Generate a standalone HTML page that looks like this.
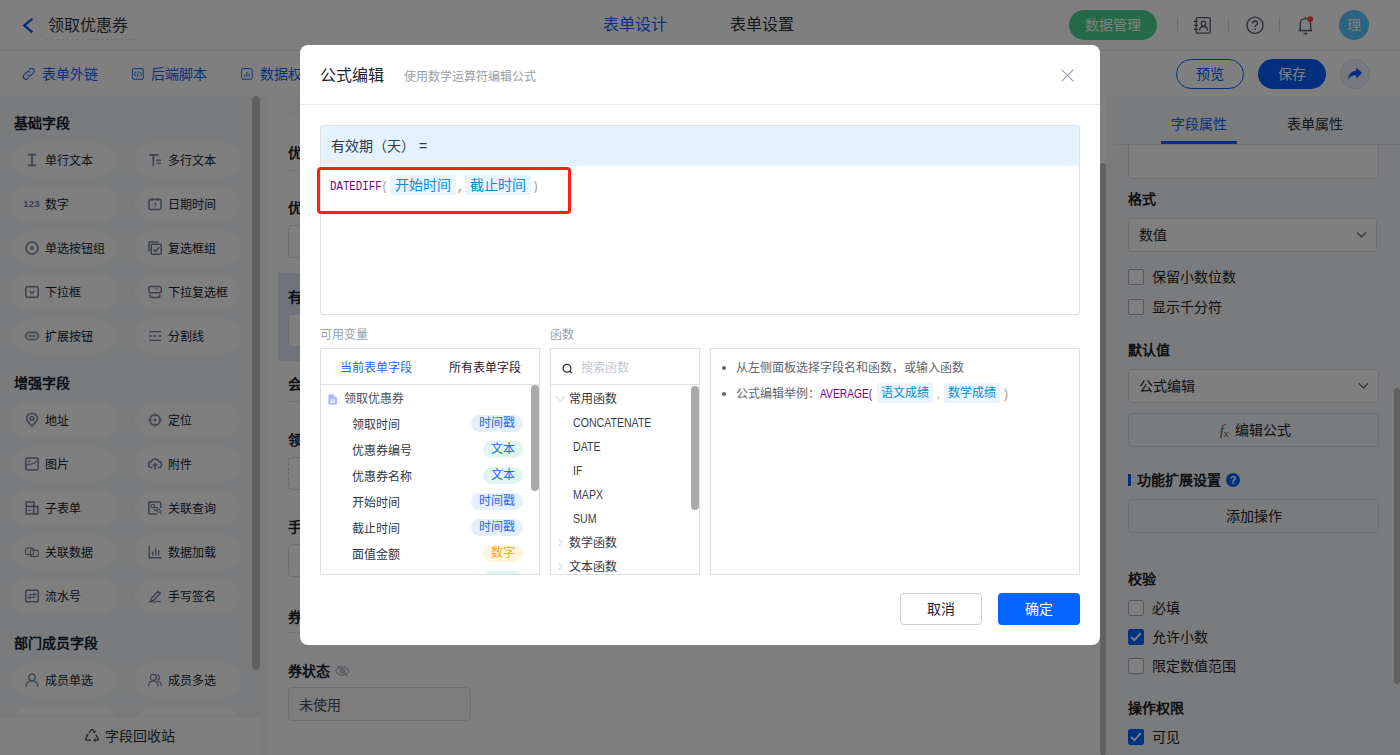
<!DOCTYPE html>
<html lang="zh-CN">
<head>
<meta charset="utf-8">
<title>公式编辑</title>
<style>
*{box-sizing:border-box;margin:0;padding:0}
html,body{width:1400px;height:755px;overflow:hidden;background:#fff}
body{font-family:"Liberation Sans",sans-serif;font-size:14px;color:#1f2329;position:relative}
.abs{position:absolute}
svg{display:block;overflow:visible}
/* ---------- base page ---------- */
#app{position:absolute;left:0;top:0;width:1400px;height:755px;background:#fff;overflow:hidden}
#hdr{position:absolute;left:0;top:0;width:1400px;height:51px;background:#fff;border-bottom:1px solid #eeeeee}
#tb{position:absolute;left:0;top:51px;width:1400px;height:45px;background:#fff}
.t{position:absolute;white-space:nowrap;line-height:20px;height:20px}
.b{font-weight:bold}
/* left */
#lp{position:absolute;left:0;top:96px;width:260px;height:659px;background:#f5f6f8;overflow:hidden}
.pill{position:absolute;width:105px;height:34px;border-radius:17px;background:#fff;font-size:12px;line-height:34px;color:#141e31;white-space:nowrap}
.pill span{position:absolute;left:33px;top:1px}
.pill svg{position:absolute;left:13px;top:9.500px}
.lt{position:absolute;left:14px;font-size:14px;font-weight:bold;color:#141e31;line-height:20px;white-space:nowrap}
/* canvas */
#cv{position:absolute;left:268px;top:96px;width:832px;height:659px;background:#fff;overflow:hidden}
/* right */
#rp{position:absolute;left:1106px;top:96px;width:294px;height:659px;background:#f5f6f8;overflow:hidden}
.cb{position:absolute;left:22px;width:16px;height:16px;border:1px solid #aab0be;border-radius:2px;background:#fff}
.cb.on{background:#0265ff;border-color:#0265ff}
.rl{position:absolute;left:46px;font-size:14px;line-height:20px;color:#1f2329;white-space:nowrap}
.rh{position:absolute;left:22px;font-size:14px;line-height:20px;font-weight:bold;color:#1f2329;white-space:nowrap}
.rbox{position:absolute;left:22px;width:251px;height:34px;border:1px solid #dcdfe4;border-radius:4px;background:#fff;font-size:14px;line-height:32px;color:#1f2329;white-space:nowrap}
/* mask */
#mask{position:absolute;left:0;top:0;width:1400px;height:755px;background:rgba(0,0,0,.5)}
/* modal */
#md{position:absolute;left:300px;top:45px;width:800px;height:600px;background:#fff;border-radius:8px;overflow:hidden}

/* modal internals (coords relative to 300,45) */
#md .hd{position:absolute;left:0;top:0;width:800px;height:60px;border-bottom:1px solid #e9e9e9}
.fx{position:absolute;left:20px;top:80px;width:760px;height:190px;border:1px solid #dfe1e5;border-radius:2px;background:#fff}
.fx .band{position:absolute;left:0;top:0;width:758px;height:40px;background:#e4f1fe}
.tag{display:inline-block;width:66px;text-align:center;overflow:hidden;white-space:nowrap;height:20px;line-height:20px;padding:0 5px;border-radius:2px;background:#e9f4fe;color:#0d8bd2;font-size:14px;vertical-align:middle}
.mono{font-family:"Liberation Mono",monospace}
.pn{position:absolute;top:303px;height:227px;border:1px solid #dddfe3;background:#fff;overflow:hidden}
.vi{position:absolute;left:31px;font-size:12px;line-height:20px;color:#33373d;white-space:nowrap}
.vt{position:absolute;height:17px;line-height:17px;border-radius:9px;font-size:12px;text-align:center;white-space:nowrap}
.vt.ts{right:16px;width:52px;background:#e6efff;color:#2468f2}
.vt.tx{right:16px;width:40px;background:#e2f5f3;color:#2468f2}
.vt.nm{right:16px;width:40px;background:#fff5dc;color:#f5a623}
.fi{position:absolute;font-size:12px;line-height:20px;color:#33373d;white-space:nowrap}
.fn{position:absolute;left:22px;font-size:12px;line-height:20px;color:#3a3f47;white-space:nowrap;transform:scaleX(.882);transform-origin:0 50%}
.sb{position:absolute;width:8px;border-radius:4px;background:#aaa}
</style>
</head>
<body>
<div id="app">
  <div id="hdr">
    <svg class="abs" style="left:20px;top:15px" width="16" height="20" viewBox="0 0 16 20"><polyline points="12.4,3.6 4.2,10.5 12.4,17.4" fill="none" stroke="#0560ff" stroke-width="2.3" stroke-linecap="butt" stroke-linejoin="miter"/></svg>
    <div class="t" style="left:48px;top:16px;font-size:16px;color:#33373d">领取优惠券</div>
    <div class="abs" style="left:46px;top:39px;width:88px;height:1px;background:repeating-linear-gradient(90deg,#e3e3e3 0,#e3e3e3 3px,transparent 3px,transparent 5px)"></div>
    <div class="t" style="left:603px;top:15px;font-size:16px;color:#1560ff">表单设计</div>
    <div class="t" style="left:730px;top:15px;font-size:16px;color:#2a2e35">表单设置</div>
    <div class="abs" style="left:1069px;top:10px;width:88px;height:30px;border-radius:15px;background:#4bd591;color:#fff;font-size:14px;line-height:30px;text-align:center">数据管理</div>
    <div class="abs" style="left:1177px;top:18px;width:1px;height:14px;background:#dcdcdc"></div>
    <div class="abs" style="left:1228px;top:18px;width:1px;height:14px;background:#dcdcdc"></div>
    <div class="abs" style="left:1279px;top:18px;width:1px;height:14px;background:#dcdcdc"></div>
    <!-- contacts icon -->
    <svg class="abs" style="left:1193px;top:16px" width="19" height="19" viewBox="0 0 19 19" fill="none" stroke="#555c70" stroke-width="1.3"><rect x="3.2" y="1.6" width="14" height="15.6" rx="1.6"/><path d="M0.8 5.4h4.2M0.8 9.4h4.2M0.8 13.4h4.2"/><circle cx="10.6" cy="7.4" r="2.3"/><path d="M6.6 14.4c0-2.6 1.8-3.9 4-3.9s4 1.3 4 3.9"/></svg>
    <!-- help icon -->
    <svg class="abs" style="left:1245px;top:15px" width="20" height="20" viewBox="0 0 20 20" fill="none" stroke="#555c70" stroke-width="1.3"><circle cx="10" cy="10.300" r="8.100"/><path d="M7.600 8.400c0-1.500 1.100-2.400 2.500-2.400s2.400.900 2.400 2.200c0 1.700-2.400 1.900-2.400 3.800" stroke-width="1.400"/><circle cx="10.100" cy="14.300" r="0.900" fill="#555c70" stroke="none"/></svg>
    <!-- bell icon -->
    <svg class="abs" style="left:1296px;top:15px" width="19" height="21" viewBox="0 0 19 21" fill="none" stroke="#555c70" stroke-width="1.4"><path d="M4.200 15.400V9.600c0-3.400 2.200-6 5.200-6s5.200 2.600 5.200 6v5.800"/><path d="M2.600 15.600h13.600" stroke-width="1.500"/><path d="M7.6 18.6h3.6" stroke-width="1.6"/><path d="M9.4 3.2V1.8"/><circle cx="14.2" cy="4.2" r="2.9" fill="#f5484a" stroke="none"/></svg>
    <div class="abs" style="left:1339px;top:10px;width:30px;height:30px;border-radius:15px;background:#58c7ff;color:#fff;font-size:14px;line-height:30px;text-align:center">理</div>
  </div>
  <div id="tb">
    <svg class="abs" style="left:22px;top:16px" width="13.600" height="13.600" viewBox="0 0 14 14" fill="none" stroke="#1560ff" stroke-width="1.050"><path d="M5.6 8.4a2.7 2.7 0 0 0 3.8 0l2.6-2.6a2.7 2.7 0 0 0-3.8-3.8l-1 1"/><path d="M8.4 5.6a2.7 2.7 0 0 0-3.8 0L2 8.2a2.7 2.7 0 0 0 3.8 3.8l1-1"/></svg>
    <div class="t" style="left:42px;top:13px;font-size:14px;color:#1560ff">表单外链</div>
    <svg class="abs" style="left:132px;top:17px" width="12" height="12" viewBox="0 0 13 12" preserveAspectRatio="none" fill="none" stroke="#1560ff" stroke-width="1"><rect x="0.600" y="0.600" width="11.600" height="10.600" rx="1.200"/><path d="M4.4 3.8L2.6 6l1.8 2.2M8.6 3.8L10.4 6 8.6 8.2M7.2 3.2L5.6 8.8" stroke-width="0.9"/></svg>
    <div class="t" style="left:151px;top:13px;font-size:14px;color:#1560ff">后端脚本</div>
    <svg class="abs" style="left:241px;top:17px" width="12" height="12" viewBox="0 0 13 12" preserveAspectRatio="none" fill="none" stroke="#1560ff" stroke-width="1"><rect x="0.600" y="0.600" width="11.600" height="10.600" rx="1.800"/><path d="M4 8.6V6.4M6.4 8.6V4M8.8 8.6V5.4" stroke-width="1"/></svg>
    <div class="t" style="left:260px;top:13px;font-size:14px;color:#1560ff">数据权限</div>
    <div class="abs" style="left:1176px;top:8px;width:68px;height:30px;border-radius:15px;border:1px solid #0560ff;color:#0560ff;font-size:14px;line-height:28px;text-align:center">预览</div>
    <div class="abs" style="left:1258px;top:8px;width:68px;height:30px;border-radius:15px;background:#0560ff;color:#fff;font-size:14px;line-height:30px;text-align:center">保存</div>
    <div class="abs" style="left:1340px;top:8px;width:30px;height:30px;border-radius:15px;background:#eef3fd;border:1px solid #dbe4f7"></div>
    <svg class="abs" style="left:1347px;top:15px" width="16" height="16" viewBox="0 0 16 16"><path d="M9.2 1.6L15.2 7l-6 5.4V9.2C5.4 9 2.8 10.4 1 13.6 1.4 8.4 4.4 5 9.2 4.8z" fill="#0560ff"/></svg>
  </div>
  <div id="lp">
    <div class="lt" style="top:17px">基础字段</div>
    <div class="pill" style="left:12px;top:47px"><svg width="14" height="14" viewBox="0 0 14 14" fill="none" stroke="#78819a" stroke-width="1.700"><path d="M3 1.600h8M7 1.600v10.800M3 12.400h8"/></svg><span>单行文本</span></div>
    <div class="pill" style="left:135px;top:47px"><svg width="14" height="14" viewBox="0 0 14 14" fill="none" stroke="#78819a" stroke-width="1.5"><path d="M1.200 1.800h9.400M5.400 1.800v11" stroke-width="1.800"/><path d="M8.400 7.200h4.400M8.400 10.400h4.400" stroke-width="1.400"/></svg><span>多行文本</span></div>
    <div class="pill" style="left:12px;top:91px"><div style="position:absolute;left:7.500px;top:-0.500px;width:24px;text-align:center;font-size:9.500px;font-weight:bold;color:#78819a;letter-spacing:0.2px;line-height:34px">123</div><span>数字</span></div>
    <div class="pill" style="left:135px;top:91px"><svg width="14" height="14" viewBox="0 0 14 14" fill="none" stroke="#78819a" stroke-width="1.5"><rect x="1" y="2.6" width="12" height="10" rx="1.6"/><path d="M4.2 1v3M9.8 1v3" stroke-width="1.4"/><path d="M5.600 6.800h2.800l-1.800 3.600" stroke-width="1"/></svg><span>日期时间</span></div>
    <div class="pill" style="left:12px;top:135px"><svg width="14" height="14" viewBox="0 0 14 14" fill="none" stroke="#78819a" stroke-width="1.5"><circle cx="7" cy="7" r="6"/><circle cx="7" cy="7" r="1.7" fill="#78819a" stroke="none"/></svg><span>单选按钮组</span></div>
    <div class="pill" style="left:135px;top:135px"><svg width="14" height="14" viewBox="0 0 14 14" fill="none" stroke="#78819a" stroke-width="1.5"><rect x="3.2" y="3.2" width="10" height="10" rx="1"/><path d="M5.4 8.2l2.2 2.2 3.6-4.2"/><path d="M1 10.4V1.8a.8.8 0 0 1 .8-.8h8.6"/></svg><span>复选框组</span></div>
    <div class="pill" style="left:12px;top:179px"><svg width="14" height="14" viewBox="0 0 14 14" fill="none" stroke="#78819a" stroke-width="1.5"><rect x="0.8" y="1.8" width="12.4" height="10.4" rx="1"/><path d="M4.8 6l2.2 2.2L9.2 6"/></svg><span>下拉框</span></div>
    <div class="pill" style="left:135px;top:179px"><svg width="14" height="14" viewBox="0 0 14 14" fill="none" stroke="#78819a" stroke-width="1.5"><rect x="0.8" y="1.6" width="12.4" height="6.2" rx="1.6"/><path d="M7.4 3.4l1.5 1.4 1.5-1.4" stroke-width="1"/><path d="M2.2 9.2v2.2a1 1 0 0 0 1 1h7.6a1 1 0 0 0 1-1V9.2"/></svg><span>下拉复选框</span></div>
    <div class="pill" style="left:12px;top:223px"><svg width="14" height="14" viewBox="0 0 14 14" fill="none" stroke="#78819a" stroke-width="1.5"><rect x="0.7" y="3.4" width="12.6" height="7.2" rx="3.6"/><path d="M3.8 7h6.4" stroke-width="1.4"/></svg><span>扩展按钮</span></div>
    <div class="pill" style="left:135px;top:223px"><svg width="14" height="14" viewBox="0 0 14 14" fill="none" stroke="#78819a" stroke-width="1.5"><path d="M1 2.6h12M1 11.4h12" stroke-width="1.3"/><path d="M1 7h2.6M5.4 7h3.2M10.4 7h2.6" stroke-width="1.3"/></svg><span>分割线</span></div>
    <div class="lt" style="top:277px">增强字段</div>
    <div class="pill" style="left:12px;top:307px"><svg width="14" height="14" viewBox="0 0 14 14" fill="none" stroke="#78819a" stroke-width="1.5"><path d="M7 13.2C3.4 9.8 1.6 7.6 1.6 5.6a5.4 5.4 0 0 1 10.8 0c0 2-1.8 4.2-5.4 7.6z"/><circle cx="7" cy="5.6" r="1.9"/></svg><span>地址</span></div>
    <div class="pill" style="left:135px;top:307px"><svg width="14" height="14" viewBox="0 0 14 14" fill="none" stroke="#78819a" stroke-width="1.5"><circle cx="7" cy="7" r="5.2"/><path d="M7 0.4v3M7 10.6v3M0.4 7h3M10.6 7h3"/><circle cx="7" cy="7" r="1.3" fill="#78819a" stroke="none"/></svg><span>定位</span></div>
    <div class="pill" style="left:12px;top:351px"><svg width="14" height="14" viewBox="0 0 14 14" fill="none" stroke="#78819a" stroke-width="1.5"><rect x="0.8" y="0.9" width="12.4" height="12.2" rx="1.6"/><path d="M1.4 8.6c2.2-2.8 4-0.6 6.2-1.8 2-1 3-2.4 5-2.4" stroke-width="1.1"/><circle cx="4.2" cy="4.2" r="0.9" fill="#78819a" stroke="none"/></svg><span>图片</span></div>
    <div class="pill" style="left:135px;top:351px"><svg width="14" height="14" viewBox="0 0 14 14" fill="none" stroke="#78819a" stroke-width="1.5"><path d="M4.6 10.6H3.8a3 3 0 0 1-.4-6 3.9 3.9 0 0 1 7.4 0 3 3 0 0 1-.4 6h-.8"/><path d="M7 12.8V7M4.8 8.8L7 6.6l2.2 2.2"/></svg><span>附件</span></div>
    <div class="pill" style="left:12px;top:395px"><svg width="14" height="14" viewBox="0 0 14 14" fill="none" stroke="#78819a" stroke-width="1.5"><path d="M1.2 1h7.6v12H1.2z"/><path d="M1.2 5.4h7.6"/><path d="M8.8 5.6h4v7.4h-4"/><path d="M3 9.2h3.4" stroke-width="1.1"/></svg><span>子表单</span></div>
    <div class="pill" style="left:135px;top:395px"><svg width="14" height="14" viewBox="0 0 14 14" fill="none" stroke="#78819a" stroke-width="1.5"><path d="M9.2 13H2a1.2 1.2 0 0 1-1.2-1.2V2.2A1.2 1.2 0 0 1 2 1h9.600a1.2 1.2 0 0 1 1.200 1.200V7"/><rect x="3.2" y="3.4" width="3" height="3" stroke-width="1"/><rect x="6.2" y="6.400" width="3" height="3" stroke-width="1"/><circle cx="10.600" cy="9.800" r="1.700" stroke-width="1"/><path d="M11.800 11.200l1.700 1.700" stroke-width="1.200"/></svg><span>关联查询</span></div>
    <div class="pill" style="left:12px;top:439px"><svg width="14" height="14" viewBox="0 0 14 14" fill="none" stroke="#78819a" stroke-width="1.2"><rect x="0.7" y="3.2" width="8" height="6.4" rx="1.6"/><rect x="5.3" y="5.200" width="8" height="6.400" rx="1.600"/></svg><span>关联数据</span></div>
    <div class="pill" style="left:135px;top:439px"><svg width="14" height="14" viewBox="0 0 14 14" fill="none" stroke="#78819a" stroke-width="1.5"><path d="M1.200 0.800v12h12" stroke-width="1.400"/><path d="M4.600 10.600V6.400M7.600 10.600V3.400M10.600 10.600V5.400" stroke-width="1.400"/></svg><span>数据加载</span></div>
    <div class="pill" style="left:12px;top:483px"><svg width="14" height="14" viewBox="0 0 14 14" fill="none" stroke="#78819a" stroke-width="1.5"><rect x="0.800" y="1.200" width="12.400" height="11.600" rx="0.800"/><path d="M3.400 5.600h7.200l-1.800-1.600M10.600 8.400H3.400l1.800 1.600" stroke-width="1.100"/></svg><span>流水号</span></div>
    <div class="pill" style="left:135px;top:483px"><svg width="14" height="14" viewBox="0 0 14 14" fill="none" stroke="#78819a" stroke-width="1.5"><path d="M3.400 9.400l6.600-7.000 2.200 2.000-6.600 7.000-3.000 0.800z"/><path d="M1.200 13c2.200-1.200 4.400 0.600 6.400-0.200 1.600-0.600 3.000-0.600 5.200 0.200" stroke-width="1.100"/></svg><span>手写签名</span></div>
    <div class="lt" style="top:537px">部门成员字段</div>
    <div class="pill" style="left:12px;top:567px"><svg width="14" height="14" viewBox="0 0 14 14" fill="none" stroke="#78819a" stroke-width="1.3"><circle cx="7" cy="4.400" r="3.200"/><path d="M1.200 13.400c0-3.400 2.400-5.600 5.800-5.600s5.800 2.200 5.800 5.600"/></svg><span>成员单选</span></div>
    <div class="pill" style="left:135px;top:567px"><svg width="14" height="14" viewBox="0 0 14 14" fill="none" stroke="#78819a" stroke-width="1.2"><circle cx="5.400" cy="4.400" r="3"/><path d="M0.600 13.200c0-3.200 2-5.400 4.800-5.400s4.800 2.200 4.800 5.400"/><path d="M9 1.600a3 3 0 0 1 0.400 5.800M10.400 8.200c1.800 0.600 3 2.400 3 5"/></svg><span>成员多选</span></div>
    <div class="pill" style="left:12px;top:611px"><svg width="14" height="14" viewBox="0 0 14 14" fill="none" stroke="#78819a" stroke-width="1.3"><circle cx="7" cy="4.400" r="3.200"/><path d="M1.200 13.400c0-3.400 2.400-5.600 5.800-5.600s5.800 2.200 5.800 5.600"/></svg><span>部门单选</span></div>
    <div class="pill" style="left:135px;top:611px"><svg width="14" height="14" viewBox="0 0 14 14" fill="none" stroke="#78819a" stroke-width="1.2"><circle cx="5.400" cy="4.400" r="3"/><path d="M0.600 13.200c0-3.200 2-5.400 4.800-5.400s4.800 2.200 4.800 5.400"/><path d="M9 1.600a3 3 0 0 1 0.400 5.800M10.400 8.200c1.800 0.600 3 2.400 3 5"/></svg><span>部门多选</span></div>
    <div class="abs" style="left:252px;top:0;width:8px;height:574px;border-radius:4px;background:#c0c0c0"></div>
    <div class="abs" style="left:0;top:621px;width:260px;height:38px;background:#fdfdfd;box-shadow:0 -2px 6px rgba(0,0,0,.05)"></div>
    <svg class="abs" style="left:84px;top:632px" width="16" height="15" viewBox="0 0 16 15" fill="none" stroke="#3a3f4a" stroke-width="1.200" stroke-linejoin="round"><path d="M5.200 5.200L7.200 1.800c.4-.7 1.300-.7 1.700 0l1.500 2.600"/><path d="M11.800 6.600l2.400 4.100c.4.700-.1 1.500-.9 1.500h-3.300"/><path d="M7 12.200H2.600c-.8 0-1.300-.8-.9-1.500l1.700-2.900"/><path d="M9 3.400l1.600 1.400.6-2M11.600 10.400l-1.800 1.800 1.800 1.600M1.800 7l1.800.6.400-2" stroke-width="1"/></svg>
    <div class="t" style="left:105px;top:630px;font-size:14px;color:#2a2e35">字段回收站</div>
  </div>
  <div id="cv">
    <!-- coords relative to (268,96) -->
    <div class="abs" style="left:20px;top:0;width:792px;height:20px;background:#f8f8f8"></div>
    <div class="t b" style="left:20px;top:47px">优惠券编号</div>
    <div class="abs" style="left:20px;top:74px;width:792px;height:1px;background:#e6e8ec"></div>
    <div class="t b" style="left:20px;top:102px">优惠券名称</div>
    <div class="abs" style="left:20px;top:129px;width:400px;height:33px;border:1px solid #dfe2e7;border-radius:4px;background:#fff"></div>
    <div class="abs" style="left:10px;top:177px;width:812px;height:88px;background:#e0e7f8"></div>
    <div class="t b" style="left:20px;top:191px">有效期（天）</div>
    <div class="abs" style="left:20px;top:218px;width:400px;height:33px;border:1px solid #dfe2e7;border-radius:4px;background:#fff"></div>
    <div class="t b" style="left:20px;top:278px">会员姓名</div>
    <div class="abs" style="left:20px;top:305px;width:792px;height:1px;background:#e6e8ec"></div>
    <div class="t b" style="left:20px;top:334px">领取人</div>
    <div class="abs" style="left:20px;top:361px;width:400px;height:33px;border:1px dashed #cfd3da;border-radius:4px;background:#fff"></div>
    <div class="t b" style="left:20px;top:421px">手机号</div>
    <div class="abs" style="left:20px;top:448px;width:400px;height:33px;border:1px solid #dfe2e7;border-radius:4px;background:#fff"></div>
    <div class="t b" style="left:20px;top:511px">券信息</div>
    <div class="abs" style="left:20px;top:536px;width:792px;height:1px;background:#e6e8ec"></div>
    <div class="t b" style="left:20px;top:565px">券状态</div>
    <svg class="abs" style="left:67px;top:568px" width="15" height="14" viewBox="0 0 15 14" fill="none" stroke="#a6adbb" stroke-width="1.1"><path d="M0.800 7c1.600-2.800 3.800-4.200 6.600-4.200s5 1.400 6.600 4.200c-1.600 2.800-3.800 4.200-6.600 4.200S2.400 9.800.8 7z"/><circle cx="7.400" cy="7" r="2.100"/><path d="M2.600 1.600l10 10.800"/></svg>
    <div class="abs" style="left:20px;top:591px;width:183px;height:34px;border:1px solid #dfe2e7;border-radius:4px;background:#fbfbfc"></div>
    <div class="t" style="left:31px;top:599px;color:#4a4f57">未使用</div>
  </div>
  <div class="abs" style="left:260px;top:96px;width:8px;height:659px;background:#f5f6f8"></div>
  <div class="abs" style="left:1100px;top:96px;width:6px;height:659px;background:#fff"></div>
  <div class="abs" style="left:1100px;top:163px;width:6px;height:592px;border-radius:3px;background:#c1c1c1"></div>
  <div id="rp">
    <!-- coords relative to (1106,96) -->
    <div class="rbox" style="top:38px;height:45px"></div>
    <div class="abs" style="left:8px;top:0;width:286px;height:48px;background:#f5f6f8"></div>
    <div class="abs" style="left:8px;top:48px;width:286px;height:1px;background:#e3e5e9"></div>
    <div class="t" style="left:65px;top:18px;font-size:14px;color:#1560ff">字段属性</div>
    <div class="t" style="left:181px;top:18px;font-size:14px;color:#2a2e35">表单属性</div>
    <div class="abs" style="left:55px;top:45px;width:76px;height:3px;background:#0560ff"></div>
    <div class="rh" style="top:93px">格式</div>
    <div class="rbox" style="top:122px;width:249px"><span style="margin-left:10px">数值</span></div>
    <svg class="abs" style="left:250px;top:135px" width="11" height="8" viewBox="0 0 11 8" fill="none" stroke="#555b66" stroke-width="1.2"><path d="M1 1.400l4.500 4.600L10 1.400"/></svg>
    <div class="cb" style="top:173px"></div><div class="rl" style="top:171px">保留小数位数</div>
    <div class="cb" style="top:203px"></div><div class="rl" style="top:201px">显示千分符</div>
    <div class="rh" style="top:244px">默认值</div>
    <div class="rbox" style="top:273px"><span style="margin-left:10px">公式编辑</span></div>
    <svg class="abs" style="left:252px;top:286px" width="11" height="8" viewBox="0 0 11 8" fill="none" stroke="#555b66" stroke-width="1.2"><path d="M1 1.400l4.500 4.600L10 1.400"/></svg>
    <div class="rbox" style="top:317px;text-align:center;background:#f5f6f8;padding-left:4px"><span style="font-family:'Liberation Serif',serif;font-style:italic;font-size:15px;color:#555b66">f</span><span style="font-size:9px;color:#555b66;position:relative;top:2px;margin-right:7px">x</span>编辑公式</div>
    <div class="abs" style="left:22px;top:378px;width:3px;height:12px;background:#0560ff"></div>
    <div class="rh" style="left:31px;top:374px">功能扩展设置</div>
    <div class="abs" style="left:120px;top:377px;width:14px;height:14px;border-radius:7px;background:#0560ff;color:#fff;font-size:11px;font-weight:bold;line-height:14px;text-align:center">?</div>
    <div class="rbox" style="top:403px;text-align:center;background:#f5f6f8">添加操作</div>
    <div class="rh" style="top:473px">校验</div>
    <div class="cb" style="top:504px"></div><div class="rl" style="top:502px">必填</div>
    <div class="cb on" style="top:533px"><svg width="14" height="14" viewBox="0 0 14 14" fill="none" stroke="#fff" stroke-width="1.900"><path d="M2 6.800l3.400 3.400 6.400-7"/></svg></div><div class="rl" style="top:531px">允许小数</div>
    <div class="cb" style="top:562px"></div><div class="rl" style="top:560px">限定数值范围</div>
    <div class="rh" style="top:602px">操作权限</div>
    <div class="cb on" style="top:633px"><svg width="14" height="14" viewBox="0 0 14 14" fill="none" stroke="#fff" stroke-width="1.900"><path d="M2 6.800l3.400 3.400 6.400-7"/></svg></div><div class="rl" style="top:631px">可见</div>
    <div class="abs" style="left:288px;top:292px;width:6px;height:296px;border-radius:3px;background:#c1c1c1"></div>
  </div>
</div>
<div id="mask"></div>
<div id="md">
  <div class="hd">
    <div class="t" style="left:20px;top:21px;font-size:16px;color:#1f2329">公式编辑</div>
    <div class="t" style="left:104px;top:22px;font-size:12px;color:#9a9ea6">使用数学运算符编辑公式</div>
    <svg class="abs" style="left:761px;top:23.500px" width="13" height="13" viewBox="0 0 13 13" fill="none" stroke="#979ca6" stroke-width="1.100"><path d="M0.600 0.600l11.800 11.800M12.400 0.600L0.600 12.400"/></svg>
  </div>
  <div class="fx">
    <div class="band"></div>
    <div class="t" style="left:10px;top:10px;font-size:14px;color:#33373d">有效期（天） =</div>
    <div class="abs mono" style="left:9px;top:50px;height:22px;line-height:22px;font-size:13px;white-space:nowrap;color:#770088;transform:scaleX(.827);transform-origin:0 50%">DATEDIFF<span style="color:#999977">(</span></div>
    <div class="abs tag" style="left:69px;top:49px">开始时间</div>
    <div class="abs mono" style="left:135px;top:50.500px;width:9.400px;height:22px;line-height:22px;font-size:13px;text-align:center;color:#999977">,</div>
    <div class="abs tag" style="left:144.400px;top:49px">截止时间</div>
    <div class="abs mono" style="left:210.400px;top:50px;width:9px;height:22px;line-height:22px;font-size:13px;text-align:center;color:#999977;transform:scaleX(.83)">)</div>
  </div>
  <div class="abs" style="left:17px;top:122px;width:254px;height:47px;border:3px solid #ff1f0e;border-radius:4px"></div>
  <div class="t" style="left:20px;top:280px;font-size:12px;color:#9a9ea6">可用变量</div>
  <div class="t" style="left:250px;top:280px;font-size:12px;color:#9a9ea6">函数</div>
  <!-- variables panel -->
  <div class="pn" style="left:20px;width:220px">
    <div class="abs" style="left:0;top:0;width:218px;height:36px;border-bottom:1px solid #dfe1e5"></div>
    <div class="t" style="left:19px;top:9px;font-size:12px;color:#2468f2">当前表单字段</div>
    <div class="t" style="left:128px;top:9px;font-size:12px;color:#1f2329">所有表单字段</div>
    <svg class="abs" style="left:7px;top:45px" width="9.300" height="11" viewBox="0 0 11 13"><path d="M0.500 0.500h6.200l3.800 3.800v8.200h-10z" fill="#aab4f7"/><path d="M6.700 0.500v3.800h3.800z" fill="#d5dbfc"/><path d="M2.600 7h5.800M2.600 9.600h5.800" stroke="#fff" stroke-width="1.200"/></svg>
    <div class="vi" style="left:23px;top:40px;color:#4a4f57">领取优惠券</div>
    <div class="vi" style="top:66px">领取时间</div><div class="vt ts" style="top:66px">时间戳</div>
    <div class="vi" style="top:92px">优惠券编号</div><div class="vt tx" style="top:92px">文本</div>
    <div class="vi" style="top:118px">优惠券名称</div><div class="vt tx" style="top:118px">文本</div>
    <div class="vi" style="top:144px">开始时间</div><div class="vt ts" style="top:144px">时间戳</div>
    <div class="vi" style="top:170px">截止时间</div><div class="vt ts" style="top:170px">时间戳</div>
    <div class="vi" style="top:196px">面值金额</div><div class="vt nm" style="top:196px">数字</div>
    <div class="vt tx" style="top:222px"></div>
    <div class="sb" style="left:210px;top:36px;height:106px"></div>
  </div>
  <!-- functions panel -->
  <div class="pn" style="left:250px;width:150px">
    <div class="abs" style="left:0;top:0;width:148px;height:36px;border-bottom:1px solid #dfe1e5"></div>
    <svg class="abs" style="left:11px;top:14px" width="11" height="11" viewBox="0 0 11 11" fill="none" stroke="#2a2e35" stroke-width="1.300"><circle cx="5" cy="5.200" r="3.900"/><path d="M7.800 8l2 2"/></svg>
    <div class="t" style="left:30px;top:9px;font-size:12px;color:#c3c8d2">搜索函数</div>
    <svg class="abs" style="left:3.500px;top:46px" width="11" height="8" viewBox="0 0 11 8" fill="none" stroke="#c5c9d1" stroke-width="1"><path d="M0.600 0.800L5.500 6.200 10.400 0.800"/></svg>
    <div class="fi" style="left:18px;top:40px">常用函数</div>
    <div class="fn" style="top:64px">CONCATENATE</div>
    <div class="fn" style="top:88px">DATE</div>
    <div class="fn" style="top:112px">IF</div>
    <div class="fn" style="top:136px">MAPX</div>
    <div class="fn" style="top:160px">SUM</div>
    <svg class="abs" style="left:7px;top:189px" width="5" height="9" viewBox="0 0 5 9" fill="none" stroke="#c5c9d1" stroke-width="1"><path d="M0.600 0.800l3.400 3.700L0.600 8.200"/></svg>
    <div class="fi" style="left:18px;top:184px">数学函数</div>
    <svg class="abs" style="left:7px;top:213px" width="5" height="9" viewBox="0 0 5 9" fill="none" stroke="#c5c9d1" stroke-width="1"><path d="M0.600 0.800l3.400 3.700L0.600 8.200"/></svg>
    <div class="fi" style="left:18px;top:208px">文本函数</div>
    <div class="sb" style="left:140px;top:37px;height:124px"></div>
  </div>
  <!-- hint panel -->
  <div class="pn" style="left:410px;width:370px">
    <div class="abs" style="left:11px;top:17px;width:4px;height:4px;border-radius:2px;background:#5e6673"></div>
    <div class="t" style="left:25px;top:9px;font-size:12px;color:#5e6470">从左侧面板选择字段名和函数，或输入函数</div>
    <div class="abs" style="left:11px;top:43px;width:4px;height:4px;border-radius:2px;background:#5e6673"></div>
    <div class="abs" style="left:25px;top:33.500px;height:22px;line-height:22px;font-size:12px;color:#5e6470;white-space:nowrap"><span style="display:inline-block;width:84px;overflow:hidden;vertical-align:top">公式编辑举例：</span><span style="display:inline-block;color:#770088;transform:scaleX(.855);transform-origin:0 50%;width:53px">AVERAGE(</span><span class="tag" style="font-size:12px;width:56px;padding:0 4px;margin-left:4px;position:relative;top:-1.500px">语文成绩</span><span style="color:#999977;margin:0 3.800px">,</span><span class="tag" style="font-size:12px;width:56px;padding:0 4px;position:relative;top:-1.500px">数学成绩</span><span style="color:#999977;margin-left:4px">)</span></div>
  </div>
  <div class="abs" style="left:600px;top:548px;width:82px;height:32px;border:1px solid #cdcfd3;border-radius:4px;background:#fff;font-size:14px;line-height:30px;text-align:center;color:#1f2329">取消</div>
  <div class="abs" style="left:698px;top:548px;width:82px;height:32px;border-radius:4px;background:#0564ff;font-size:14px;line-height:32px;text-align:center;color:#fff">确定</div>
</div>
</body>
</html>
